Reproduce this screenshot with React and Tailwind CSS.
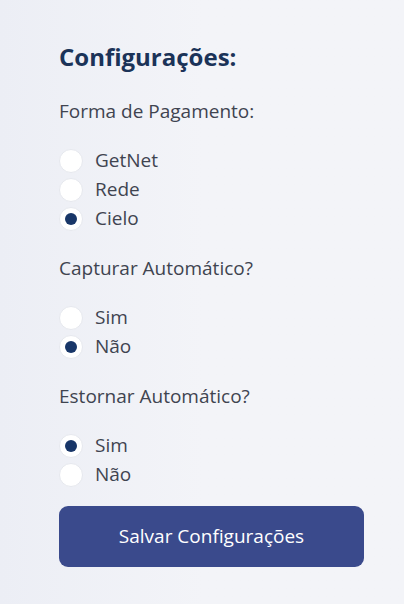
const groups = [
  { label: 'Forma de Pagamento:', options: ['GetNet', 'Rede', 'Cielo'], selected: 'Cielo' },
  { label: 'Capturar Automático?', options: ['Sim', 'Não'], selected: 'Não' },
  { label: 'Estornar Automático?', options: ['Sim', 'Não'], selected: 'Sim' },
];

const Radio = ({ label, checked }) => (
  <label className="flex items-center gap-[12px] h-[29px] text-[19px] text-[#3f4450]">
    <span className="w-[24px] h-[24px] rounded-full bg-white border border-[#e6e8ee] flex items-center justify-center">
      {checked && <span className="w-[12px] h-[12px] rounded-full bg-[#183668]"></span>}
    </span>
    <span>{label}</span>
  </label>
);

export default function App() {
  return (
    <div
      className="w-[404px] h-[604px] bg-gradient-to-r from-[#eceef5] via-[#f3f4f8] to-[#f3f4f8] pl-[59px] pr-[41px] pt-[41px]"
      style={{ fontFamily: '"Open Sans", "Noto Sans", sans-serif' }}
    >
      <h2 className="text-[24px] font-bold text-[#1b3358] leading-[32px]">Configurações:</h2>
      {groups.map((g, i) => (
        <div key={i} className={i === 0 ? 'mt-[25px]' : 'mt-[22px]'}>
          <p className="text-[19px] text-[#3f4450] leading-[26px]">{g.label}</p>
          <div className="mt-[22px] flex flex-col">
            {g.options.map((o) => (
              <Radio key={o} label={o} checked={o === g.selected} />
            ))}
          </div>
        </div>
      ))}
      <button className="mt-[17px] w-[305px] h-[61px] rounded-[9px] bg-[#3a4a8c] text-white text-[19px]">
        Salvar Configurações
      </button>
    </div>
  );
}
